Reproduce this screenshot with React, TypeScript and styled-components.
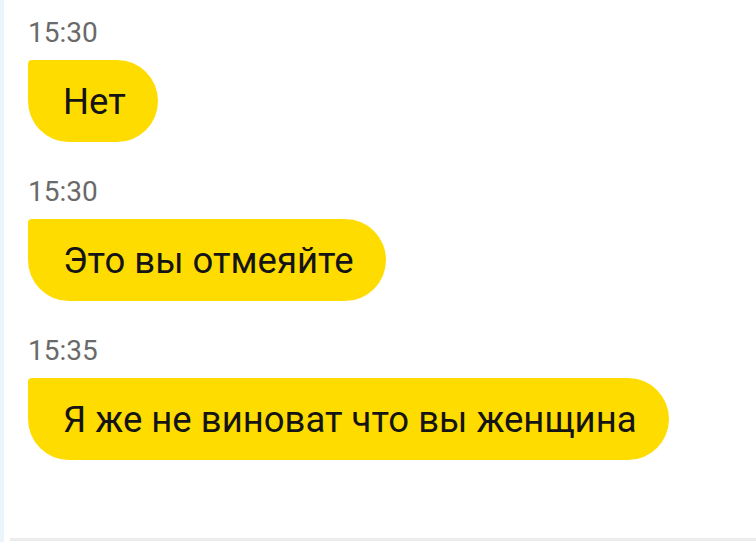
import styled, { createGlobalStyle } from "styled-components";

const GlobalStyle = createGlobalStyle`
  html, body {
    margin: 0;
    padding: 0;
    background: #ffffff;
  }
`;

const messages = [
  { time: "15:30", text: "Нет" },
  { time: "15:30", text: "Это вы отмеяйте" },
  { time: "15:35", text: "Я же не виноват что вы женщина" },
];

export default function App() {
  return (
    <>
      <GlobalStyle />
      <Screen>
        <SideStrip />
        <Chat>
          {messages.map((m, i) => (
            <MessageGroup key={i}>
              <Time>{m.time}</Time>
              <Bubble>{m.text}</Bubble>
            </MessageGroup>
          ))}
        </Chat>
      </Screen>
    </>
  );
}

const Screen = styled.div`
  display: flex;
  width: 756px;
  height: 542px;
  overflow: hidden;
  background: #ffffff;
  font-family: Roboto, "Noto Sans", sans-serif;
`;

const SideStrip = styled.div`
  width: 4px;
  flex-shrink: 0;
  background: #eaf4fb;
`;

const Chat = styled.div`
  flex: 1;
  display: flex;
  flex-direction: column;
  align-items: flex-start;
  gap: 35px;
  margin: 0 0 1px 6px;
  padding: 18px 0 0 18px;
  border-bottom: 3px solid #ececec;
  box-sizing: border-box;
`;

const MessageGroup = styled.div`
  display: flex;
  flex-direction: column;
  align-items: flex-start;
  gap: 12px;
`;

const Time = styled.div`
  font-size: 28px;
  line-height: 30px;
  color: #6a6a6a;
`;

const Bubble = styled.div`
  display: flex;
  align-items: center;
  height: 82px;
  box-sizing: border-box;
  padding: 0 32px 0 35px;
  background: #ffdc00;
  color: #141414;
  font-size: 36.5px;
  border-radius: 4px 42px 42px 42px;
  white-space: nowrap;
`;
